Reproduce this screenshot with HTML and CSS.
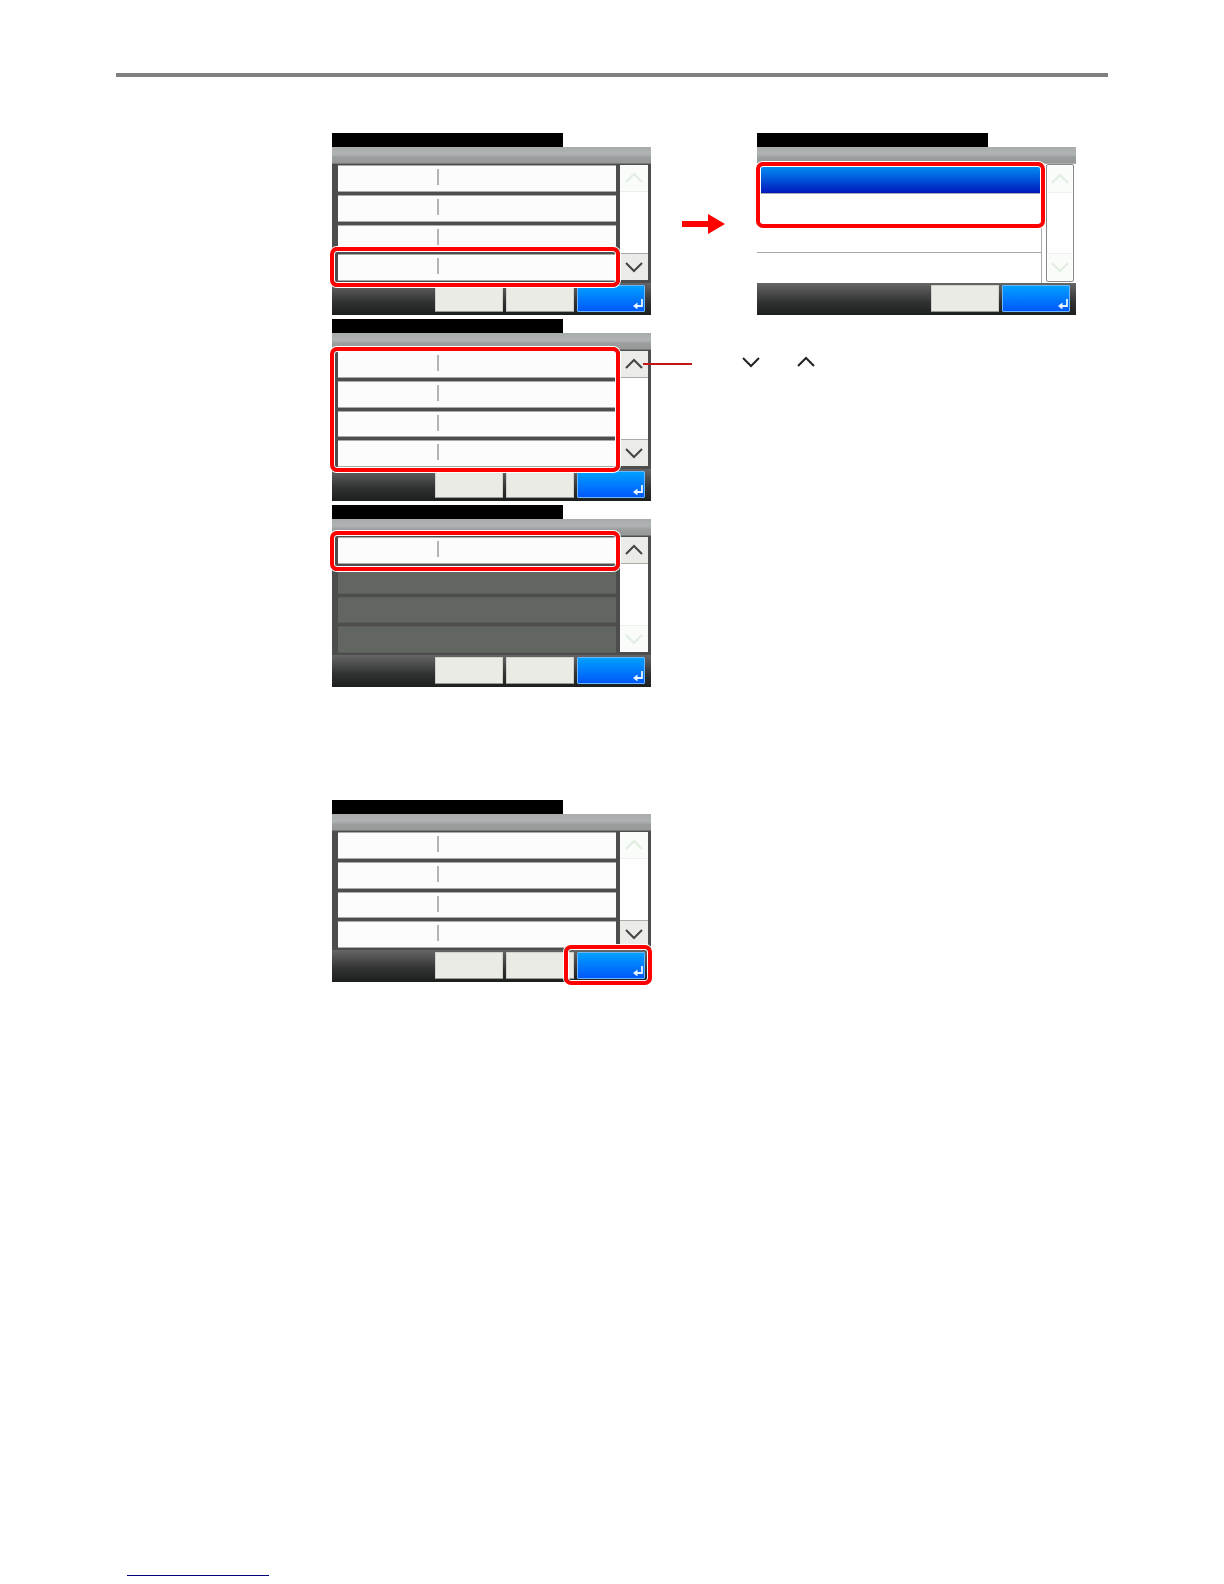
FILE: index.html
```
<!DOCTYPE html>
<html lang="en">
<head>
<meta charset="utf-8">
<title>Operation panel settings</title>
<link rel="stylesheet" href="styles.css">
</head>
<body>
<svg class="symbols" aria-hidden="true">
  <symbol id="up" viewBox="0 0 18 12"><path d="M1 10 9 2l8 8" fill="none" stroke="currentColor" stroke-width="2"/></symbol>
  <symbol id="down" viewBox="0 0 18 12"><path d="M1 2l8 8 8-8" fill="none" stroke="currentColor" stroke-width="2"/></symbol>
  <symbol id="enter" viewBox="0 0 10 10"><path d="M9 0v7H3" fill="none" stroke="currentColor" stroke-width="1.8"/><path d="M0 7l4.5-3.5v7z" fill="currentColor"/></symbol>
</svg>
<header class="page-head"></header>
<main class="steps">
  <div class="step">
    <section class="screen">
      <div class="status"></div>
      <div class="title"></div>
      <div class="body">
        <ul class="rows"><li></li><li></li><li></li><li></li></ul>
        <div class="scroll">
          <button class="off" aria-label="Up" disabled><svg><use href="#up"/></svg></button>
          <button aria-label="Down"><svg><use href="#down"/></svg></button>
        </div>
      </div>
      <div class="actions"><button aria-label="Cancel"></button><button aria-label="Back"></button><button class="ok" aria-label="OK"><svg><use href="#enter"/></svg></button></div>
      <div class="mark mark-last"></div>
    </section>
    <svg class="arrow" viewBox="0 0 43 20" aria-hidden="true"><path d="M0 7h26V0l17 10-17 10v-7H0z" fill="#f00"/></svg>
    <section class="screen choice">
      <div class="status"></div>
      <div class="title"></div>
      <div class="body">
        <ul class="rows"><li class="selected"></li><li></li><li></li><li></li></ul>
        <div class="scroll">
          <button class="off" aria-label="Up" disabled><svg><use href="#up"/></svg></button>
          <button class="off" aria-label="Down" disabled><svg><use href="#down"/></svg></button>
        </div>
      </div>
      <div class="actions"><button aria-label="Cancel"></button><button class="ok" aria-label="OK"><svg><use href="#enter"/></svg></button></div>
      <div class="mark mark-options"></div>
    </section>
  </div>
  <div class="step">
    <section class="screen">
      <div class="status"></div>
      <div class="title"></div>
      <div class="body">
        <ul class="rows"><li></li><li></li><li></li><li></li></ul>
        <div class="scroll">
          <button aria-label="Up"><svg><use href="#up"/></svg></button>
          <button aria-label="Down"><svg><use href="#down"/></svg></button>
        </div>
      </div>
      <div class="actions"><button aria-label="Cancel"></button><button aria-label="Back"></button><button class="ok" aria-label="OK"><svg><use href="#enter"/></svg></button></div>
      <div class="mark mark-all"></div>
      <div class="leader"></div>
    </section>
    <p class="note"><svg><use href="#down"/></svg><svg><use href="#up"/></svg></p>
  </div>
  <div class="step">
    <section class="screen">
      <div class="status"></div>
      <div class="title"></div>
      <div class="body">
        <ul class="rows"><li></li><li class="empty"></li><li class="empty"></li><li class="empty"></li></ul>
        <div class="scroll">
          <button aria-label="Up"><svg><use href="#up"/></svg></button>
          <button class="off" aria-label="Down" disabled><svg><use href="#down"/></svg></button>
        </div>
      </div>
      <div class="actions"><button aria-label="Cancel"></button><button aria-label="Back"></button><button class="ok" aria-label="OK"><svg><use href="#enter"/></svg></button></div>
      <div class="mark mark-first"></div>
    </section>
  </div>
  <div class="step confirm">
    <section class="screen">
      <div class="status"></div>
      <div class="title"></div>
      <div class="body">
        <ul class="rows"><li></li><li></li><li></li><li></li></ul>
        <div class="scroll">
          <button class="off" aria-label="Up" disabled><svg><use href="#up"/></svg></button>
          <button aria-label="Down"><svg><use href="#down"/></svg></button>
        </div>
      </div>
      <div class="actions"><button aria-label="Cancel"></button><button aria-label="Back"></button><button class="ok" aria-label="OK"><svg><use href="#enter"/></svg></button></div>
      <div class="mark mark-ok"></div>
    </section>
  </div>
</main>
<footer class="page-foot"><a href="#up" aria-label="Back to top"></a></footer>
</body>
</html>
```
FILE: styles.css
```
* { box-sizing: border-box; }
body {
  margin: 0;
  min-height: 100vh;
  display: flex;
  flex-direction: column;
  background: #fff;
  font-family: "Liberation Sans", sans-serif;
}
.symbols { position: absolute; width: 0; height: 0; }
.page-head { margin: 73px 116px 56px; height: 4px; background: #808080; }
.steps { display: flex; flex-direction: column; gap: 4px; padding-left: 332px; }
.step { display: flex; }
.confirm { margin-top: 109px; }

.screen { position: relative; width: 319px; flex: none; }
.status { width: 231px; height: 14px; background: #000; }
.title {
  height: 17px;
  background: linear-gradient(#a8acac, #b0b3b3 45%, #9b9e9e 65%, #979999);
  border-bottom: 1px solid #777;
}
.body {
  display: flex;
  gap: 4px;
  height: 119px;
  padding: 1px 3px 2px 6px;
  background: #4d4d4d;
}
.rows {
  flex: 1;
  display: flex;
  flex-direction: column;
  gap: 3px;
  margin: 0;
  padding: 0;
  list-style: none;
}
.rows li {
  height: 27px;
  padding: 3px 0 0 99px;
  border: solid #aaa;
  border-width: 1px 0;
  background: #fcfcfc;
}
.rows li::before { content: ""; display: block; width: 2px; height: 16px; background: #b4b4b6; }
.rows .empty { background: #626660; border-color: #5a5d58; }
.rows .empty::before { content: none; }

.scroll {
  width: 28px;
  height: 115px;
  display: flex;
  flex-direction: column;
  justify-content: space-between;
  background: #fff;
}
.scroll button {
  height: 27px;
  display: grid;
  place-items: center;
  padding: 0;
  border: solid #aaa;
  border-width: 0 0 1px;
  background: #ebebe7;
  color: #444;
}
.scroll button:last-child { border-width: 1px 0 0; }
.scroll .off, .scroll .off:last-child { background: #f9fcf9; border-color: #edf0ec; color: #e2eee2; }
.scroll svg, .note svg { display: block; width: 18px; height: 12px; }

.actions {
  display: flex;
  justify-content: flex-end;
  gap: 3px;
  height: 32px;
  padding: 2px 6px 3px;
  background: linear-gradient(#666, #303231 60%, #1c201d);
}
.actions button {
  width: 68px;
  padding: 0;
  border: 1px solid #d2d2cd;
  border-bottom-color: #999;
  border-radius: 1px;
  background: #ebebe6;
}
.actions .ok {
  display: flex;
  justify-content: flex-end;
  align-items: flex-end;
  padding: 0 1px 2px 0;
  border-color: #6cb6ff;
  background: linear-gradient(#00a0ff, #0058fa);
  color: #e8f4ff;
}
.actions svg { width: 10px; height: 10px; overflow: visible; }

.arrow { width: 43px; height: 20px; margin: 81px 32px 0 31px; }
.choice .title { border-color: #aaa; }
.choice .body { gap: 4px; padding: 0 2px 0 0; background: #fff; }
.choice .rows { gap: 0; border-right: 1px solid #aaa; }
.choice .rows li { height: 30px; border: solid #aaa; border-width: 0 0 1px; background: #fff; }
.choice .rows li::before { content: none; }
.choice .rows .selected { border-top: 2px solid #fff; border-left: 2px solid #fff; background: linear-gradient(#0090f4, #0018bd); }
.choice .rows li:last-child { border: 0; }
.choice .scroll { height: 118px; padding: 1px; border: 1px solid #888; border-radius: 2px; }

.mark {
  position: absolute;
  border: 4px solid #f00;
  border-radius: 7px;
  box-shadow: 0 0 0 1px #fff, inset 0 0 0 1px #fff;
}
.mark-last { left: -2px; right: 31px; top: 114px; height: 40px; }
.mark-options { left: -1px; right: 31px; top: 29px; height: 66px; }
.mark-all { left: -2px; right: 31px; top: 28px; height: 125px; }
.mark-first { left: -2px; right: 31px; top: 26px; height: 40px; }
.mark-ok { right: -1px; bottom: -3px; width: 88px; height: 40px; }
.leader { position: absolute; left: 311px; top: 44px; width: 49px; height: 2px; background: #c41616; }
.note { display: flex; gap: 37px; margin: 37px 0 0 91px; color: #222; }

.page-foot { margin-top: auto; padding: 0 127px 8px; }
.page-foot a { display: block; width: 142px; height: 14px; border-bottom: 1px solid #00007a; }
```
